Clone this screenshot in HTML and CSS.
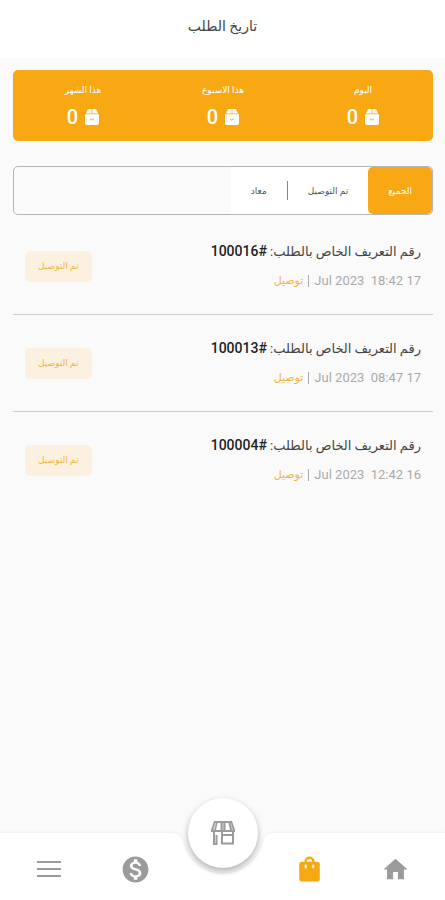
FILE: index.html
```html
<!DOCTYPE html>
<html lang="ar" dir="rtl">
<head>
    <meta charset="UTF-8">
    <meta name="viewport" content="width=device-width, initial-scale=1.0">
    <title>تاريخ الطلب</title>
    <link rel="stylesheet" href="styles.css">
</head>
<body>
    <svg class="sprite" aria-hidden="true">
        <symbol id="box" viewBox="0 0 14 16">
            <path fill="#fff" d="M3 0h3.600v4.500H1zM7.400 0H11l2 4.500H7.400zM0 5.200h14V14a2 2 0 0 1-2 2H2a2 2 0 0 1-2-2z"/>
            <path fill="none" stroke="#f8a813" d="M5 10l1.500 1L9 9.500"/>
        </symbol>
    </svg>
    <header>
        <h1>تاريخ الطلب</h1>
    </header>
    <main>
        <section class="stats">
            <div class="stat">
                <h2>اليوم</h2>
                <p><svg class="box"><use href="#box"/></svg><span>0</span></p>
            </div>
            <div class="stat">
                <h2>هذا الاسبوع</h2>
                <p><svg class="box"><use href="#box"/></svg><span>0</span></p>
            </div>
            <div class="stat">
                <h2>هذا الشهر</h2>
                <p><svg class="box"><use href="#box"/></svg><span>0</span></p>
            </div>
        </section>

        <div class="tabs">
            <button type="button" class="tab active">الجميع</button>
            <button type="button" class="tab">تم التوصيل</button>
            <span class="separator"></span>
            <button type="button" class="tab">معاد</button>
        </div>

        <ul class="orders">
            <li class="order">
                <div>
                    <h3>رقم التعريف الخاص بالطلب: <b>#<bdi>100016</bdi></b></h3>
                    <p class="meta"><span class="date">17 Jul 2023 &nbsp;18:42</span><span class="line"></span><span class="type">توصيل</span></p>
                </div>
                <span class="badge">تم التوصيل</span>
            </li>
            <li class="order">
                <div>
                    <h3>رقم التعريف الخاص بالطلب: <b>#<bdi>100013</bdi></b></h3>
                    <p class="meta"><span class="date">17 Jul 2023 &nbsp;08:47</span><span class="line"></span><span class="type">توصيل</span></p>
                </div>
                <span class="badge">تم التوصيل</span>
            </li>
            <li class="order">
                <div>
                    <h3>رقم التعريف الخاص بالطلب: <b>#<bdi>100004</bdi></b></h3>
                    <p class="meta"><span class="date">16 Jul 2023 &nbsp;12:42</span><span class="line"></span><span class="type">توصيل</span></p>
                </div>
                <span class="badge">تم التوصيل</span>
            </li>
        </ul>
    </main>
    <nav>
        <div class="shape">
            <span></span>
            <svg width="120" height="67" viewBox="0 0 120 67"><path fill="#fff" d="M0 0h8c7 0 10 3 12 9a41 41 0 0 0 80 0c2-6 5-9 12-9h8v67H0z"/></svg>
            <span></span>
        </div>
        <a href="#" aria-label="الرئيسية">
            <svg width="29" height="29" viewBox="0 0 24 24"><path fill="#9b9b9b" d="M10 20v-6h4v6h5v-8h3L12 3 2 12h3v8z"/></svg>
        </a>
        <a href="#" aria-label="الطلبات">
            <svg width="29" height="29" viewBox="0 0 24 24"><path fill="#f8a813" d="M18.500 5.500h-2.300a4.200 4.200 0 0 0-8.400 0H5.500a2 2 0 0 0-2 2V20a2 2 0 0 0 2 2h13a2 2 0 0 0 2-2V7.500a2 2 0 0 0-2-2z"/><path fill="#fff" d="M9.800 5.500a2.200 2.200 0 0 1 4.400 0zM8 8h1.800v2.300a.9.9 0 0 1-1.800 0zM14.200 8H16v2.300a.9.9 0 0 1-1.800 0z"/></svg>
        </a>
        <a href="#" class="store" aria-label="المتجر">
            <svg width="26" height="26" viewBox="0 0 26 26"><path fill="#9b9b9b" d="M4 1h18l3 9v2H1v-2z"/><path fill="#fff" d="M7.500 3h3v7H6zM15.500 3h3L20 10h-4.500z"/><path fill="#d8d8d8" d="M5 3h1L4.500 10H3zM12.500 3h1v7h-1zM20.500 3h.5l2 7h-1z"/><path fill="none" stroke="#9b9b9b" stroke-width="2" d="M4 12v12h2.500V15M12 15h11v8.500H12zM12 12v4M23 12v4"/></svg>
        </a>
        <a href="#" aria-label="المحفظة">
            <svg width="31" height="31" viewBox="0 0 24 24"><path fill="#9b9b9b" d="M12 2C6.480 2 2 6.480 2 12s4.480 10 10 10 10-4.480 10-10S17.520 2 12 2zm1.410 16.090V20h-2.670v-1.930c-1.710-.36-3.160-1.460-3.270-3.400h1.960c.1 1.050.82 1.870 2.650 1.870 1.960 0 2.400-.98 2.400-1.590 0-.83-.44-1.610-2.670-2.140-2.480-.6-4.180-1.620-4.180-3.670 0-1.720 1.390-2.840 3.110-3.210V4h2.670v1.950c1.860.45 2.790 1.860 2.850 3.390H14.300c-.05-1.110-.64-1.870-2.220-1.870-1.500 0-2.400.68-2.400 1.640 0 .84.65 1.390 2.670 1.910s4.180 1.390 4.180 3.910c-.01 1.830-1.380 2.830-3.120 3.160z"/></svg>
        </a>
        <a href="#" aria-label="القائمة">
            <svg width="24" height="18" viewBox="0 0 24 18"><path stroke="#9b9b9b" stroke-width="2" d="M0 2h24M0 9h24M0 16h24"/></svg>
        </a>
    </nav>
</body>
</html>
```
FILE: styles.css
```css
* {
    margin: 0;
    padding: 0;
    box-sizing: border-box;
}

body {
    min-height: 100vh;
    display: flex;
    flex-direction: column;
    font-family: Roboto, "DejaVu Sans", sans-serif;
    background: #fafafa;
    color: #444;
}

.sprite {
    position: absolute;
    width: 0;
    height: 0;
}

header {
    height: 58px;
    padding-top: 14px;
    background: #fff;
    text-align: center;
}

h1 {
    font-size: 14px;
    line-height: 24px;
    font-weight: normal;
}

main {
    flex: 1;
    padding: 12px 12px 12px 13px;
}

.stats {
    display: grid;
    grid-template-columns: repeat(3, 1fr);
    height: 71px;
    padding-top: 12px;
    border-radius: 5px;
    background: #f8a813;
    color: #fff;
    text-align: center;
}

.stat h2 {
    font-size: 9px;
    line-height: 16px;
    font-weight: normal;
}

.stat p {
    display: flex;
    justify-content: center;
    align-items: center;
    gap: 7px;
    margin-top: 6px;
    font-size: 20px;
    line-height: 26px;
    font-weight: 500;
}

.box {
    width: 14px;
    height: 16px;
}

.tabs {
    display: flex;
    height: 49px;
    margin-top: 25px;
    border: 1px solid #b5b5b5;
    border-radius: 5px;
    overflow: hidden;
}

.tab {
    padding: 0 20px;
    border: none;
    background: #fff;
    color: #555;
    font-family: inherit;
    font-size: 9px;
    cursor: pointer;
}

.tab.active {
    z-index: 1;
    border-radius: 5px;
    background: #f8a813;
    color: #fff;
}

/* runs under the rounded corners of the active tab */
.tab.active + .tab {
    margin-right: -5px;
    padding-right: 25px;
}

.separator {
    width: 1px;
    border: solid #fff;
    border-width: 14px 0;
    background: #888;
}

.orders {
    list-style: none;
}

.order {
    display: flex;
    justify-content: space-between;
    align-items: center;
    height: 97px;
    padding: 0 12px;
    border-bottom: 1px solid #ccc;
}

.order:first-child {
    margin-top: 3px;
}

.order:last-child {
    border-bottom-color: transparent;
}

h3 {
    font-size: 13px;
    line-height: 22px;
    font-weight: normal;
}

h3 b {
    font-size: 14px;
    font-weight: 500;
    color: #222;
}

.meta {
    display: flex;
    align-items: center;
    gap: 5px;
    margin-top: 6px;
    font-size: 13px;
    line-height: 24px;
    color: #aaa;
}

.line {
    width: 1px;
    height: 12px;
    background: #aaa;
}

.type {
    font-size: 11px;
    color: #f0b540;
}

.badge {
    padding: 0 13px;
    border-radius: 5px;
    background: #fcf1e0;
    color: #f0b540;
    font-size: 9px;
    line-height: 31px;
}

nav {
    position: sticky;
    bottom: 0;
    display: grid;
    grid-template-columns: repeat(5, 1fr);
    height: 67px;
    padding: 0 6px;
}

nav a {
    display: flex;
    align-items: center;
    justify-content: center;
    padding-top: 5px;
    z-index: 1;
}

/* white bar with the notch for the store button */
.shape {
    position: absolute;
    inset: 0;
    display: flex;
    filter: drop-shadow(0 -1px 1px rgba(0, 0, 0, 0.04));
}

.shape span {
    flex: 1;
    background: #fff;
}

nav .store {
    justify-self: center;
    width: 70px;
    height: 70px;
    margin-top: -35px;
    padding: 0;
    border-radius: 50%;
    background: #fff;
    box-shadow: 0 3px 6px rgba(0, 0, 0, 0.3);
}
```
